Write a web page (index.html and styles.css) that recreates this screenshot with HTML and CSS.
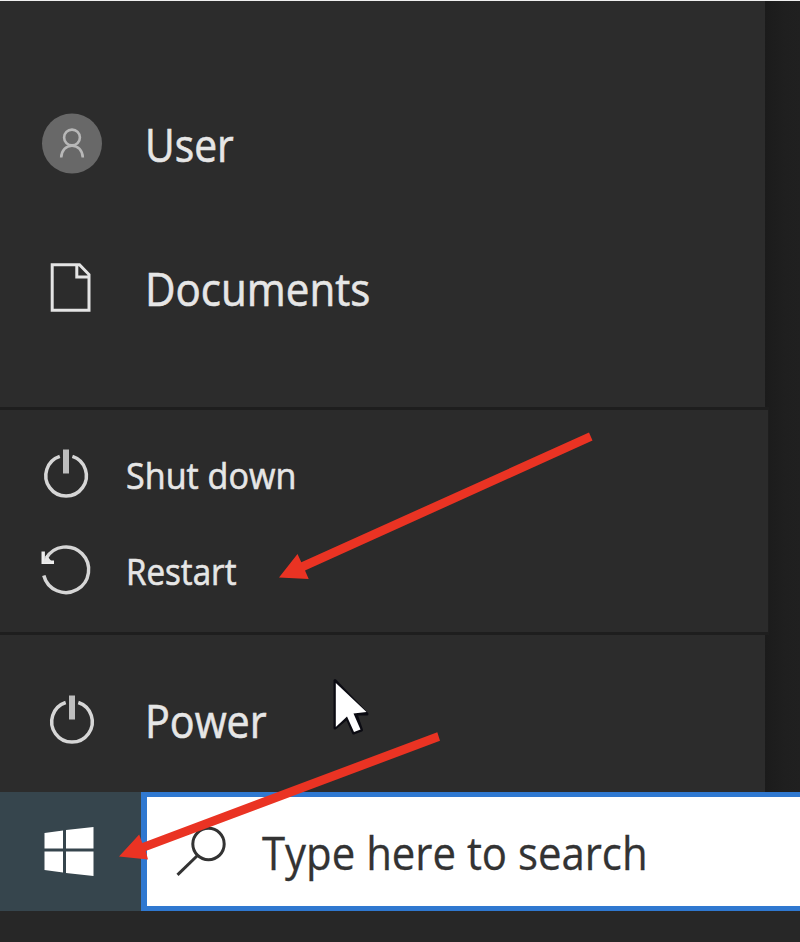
FILE: index.html
```html
<!DOCTYPE html>
<html lang="en">
<head>
<meta charset="utf-8">
<title>Start menu</title>
<link rel="stylesheet" href="styles.css">
</head>
<body>
<main class="screen">
  <nav class="places">
    <div class="row">
      <svg class="icon" viewBox="0 71 145 144"><circle cx="72" cy="143.500" r="30" fill="#686868"/><g fill="none" stroke="#b8b8b8" stroke-width="2.600"><circle cx="72" cy="137.500" r="7.900"/><path d="M61.200 157.500C61.500 150.500 66 145.700 72 145.700S82.500 150.500 82.800 157.500"/></g></svg>
      <span class="label user">User</span>
    </div>
    <div class="row">
      <svg class="icon" viewBox="0 215 145 144"><path d="M52.200 264.800H79.500L89 274.500V310.200H52.200ZM76.800 265V277H89" fill="none" stroke="#e4e4e4" stroke-width="3"/></svg>
      <span class="label documents">Documents</span>
    </div>
  </nav>
  <section class="power-menu">
    <div class="row small">
      <svg class="icon" viewBox="0 426 126 96"><path d="M59.800 456.400A20.300 20.300 0 1 0 72.400 456.400" fill="none" stroke="#d6d6d6" stroke-width="3.500"/><path d="M66 449.500V473.500" stroke="#bdbdbd" stroke-width="6"/></svg>
      <span class="label shut">Shut down</span>
    </div>
    <div class="row small">
      <svg class="icon" viewBox="0 522 126 96"><path d="M43.800 575.500A22.800 22.800 0 1 0 46.200 558.200" fill="none" stroke="#d6d6d6" stroke-width="3.500"/><path d="M43.200 551.500V562.200H54" fill="none" stroke="#eee" stroke-width="3.400"/><path d="M43 563L46.500 555L52 562Z" fill="#e6e6e6"/></svg>
      <span class="label restart">Restart</span>
    </div>
  </section>
  <section class="power">
    <div class="row">
      <svg class="icon" viewBox="0 648 145 144"><path d="M65.700 702.500A20.300 20.300 0 1 0 78.300 702.500" fill="none" stroke="#d6d6d6" stroke-width="3.500"/><path d="M72 695.500V719.500" stroke="#bdbdbd" stroke-width="6"/></svg>
      <span class="label power-label">Power</span>
    </div>
  </section>
  <footer class="taskbar">
    <div class="start">
      <svg viewBox="0 792 141 119"><path d="M44.500 833L63 830.500V848.500H44.500ZM66 830L93.500 827V848.500H66ZM44.500 851.500H63V872.500L44.500 870ZM66 851.500H93.500V876L66 873Z" fill="#fff"/></svg>
    </div>
    <div class="search">
      <svg class="glass" viewBox="147 797 115 109"><g fill="none" stroke="#333" stroke-width="3"><circle cx="208.500" cy="844" r="15.700"/><path d="M197.500 855.500L177.500 874.800"/></g></svg>
      <span class="label query">Type here to search</span>
    </div>
  </footer>
  <svg class="overlay" viewBox="0 0 800 942">
    <path d="M335 680.500V728L347 718L353.500 733L361.500 730L356 714H367Z" fill="#0b0b12" stroke="#0b0b12" stroke-width="3" stroke-linejoin="round"/>
    <path d="M335.800 683V727L347 716.500L354 732L360.500 729.500L353.500 713.500L366.500 712Z" fill="#fff"/>
    <g fill="#ea3323"><path d="M279 577.500L297.500 554L301.300 562.300L589 432.500L592.500 440.500L305 570.500L308.700 579Z"/><path d="M119 856.500L139.200 834.500L142.300 843L437.300 732.200L440 740.800L145.800 851L148 859.500Z"/></g>
  </svg>
</main>
</body>
</html>
```
FILE: styles.css
```css
* { box-sizing: border-box; }
body { margin: 0; background: #282828; }
.screen {
  position: relative;
  width: 800px;
  height: 942px;
  overflow: hidden;
  display: flex;
  flex-direction: column;
  align-items: flex-start;
  border-top: 1px solid #f0f0f0;
  background: linear-gradient(90deg, #1b1b1b 765px, #1f1f1f 785px, #202020 800px);
  font-family: "Open Sans", "Noto Sans", sans-serif;
  color: #e6e6e6;
}
.places {
  width: 765px;
  height: 406px;
  padding-top: 70px;
  background: #2c2c2c;
}
.row { display: flex; align-items: center; height: 144px; }
.icon { display: block; flex: none; width: 145px; height: 144px; }
.label {
  font-size: 46px;
  line-height: 62px;
  white-space: pre;
  transform-origin: 0 50%;
  -webkit-text-stroke: .6px currentColor;
}
.user { padding-top: 2px; transform: scaleX(.887); }
.documents { padding-top: 2px; transform: scaleX(.915); }
.power-label { transform: scaleX(.897); }
.power-menu {
  width: 769px;
  height: 228px;
  padding-top: 16px;
  border: solid #1e1e1e;
  border-width: 3px 1px 3px 0;
  background: #2b2b2b;
}
.small { height: 96px; }
.small .icon { width: 126px; height: 96px; }
.small .label { padding-top: 2px; font-size: 36.5px; line-height: 50px; }
.small .shut { transform: scaleX(.935); }
.small .restart { transform: scaleX(.908); }
.power {
  width: 765px;
  height: 157px;
  padding-top: 13px;
  background: #2c2c2c;
}
.taskbar {
  display: flex;
  width: 800px;
  height: 150px;
  padding-bottom: 31px;
  background: #272727;
}
.start { width: 141px; height: 119px; background: #36454d; }
.start svg { display: block; width: 141px; height: 119px; }
.search {
  display: flex;
  align-items: center;
  width: 659px;
  height: 119px;
  border: 5px solid #2f78d0;
  border-left-width: 6px;
  border-right: 0;
  background: #fff;
  color: #333;
}
.glass { display: block; flex: none; width: 115px; height: 109px; }
.query { padding-top: 1px; transform: scaleX(.911); -webkit-text-stroke-width: .3px; }
.overlay { position: absolute; top: -1px; left: 0; width: 800px; height: 942px; }
```
